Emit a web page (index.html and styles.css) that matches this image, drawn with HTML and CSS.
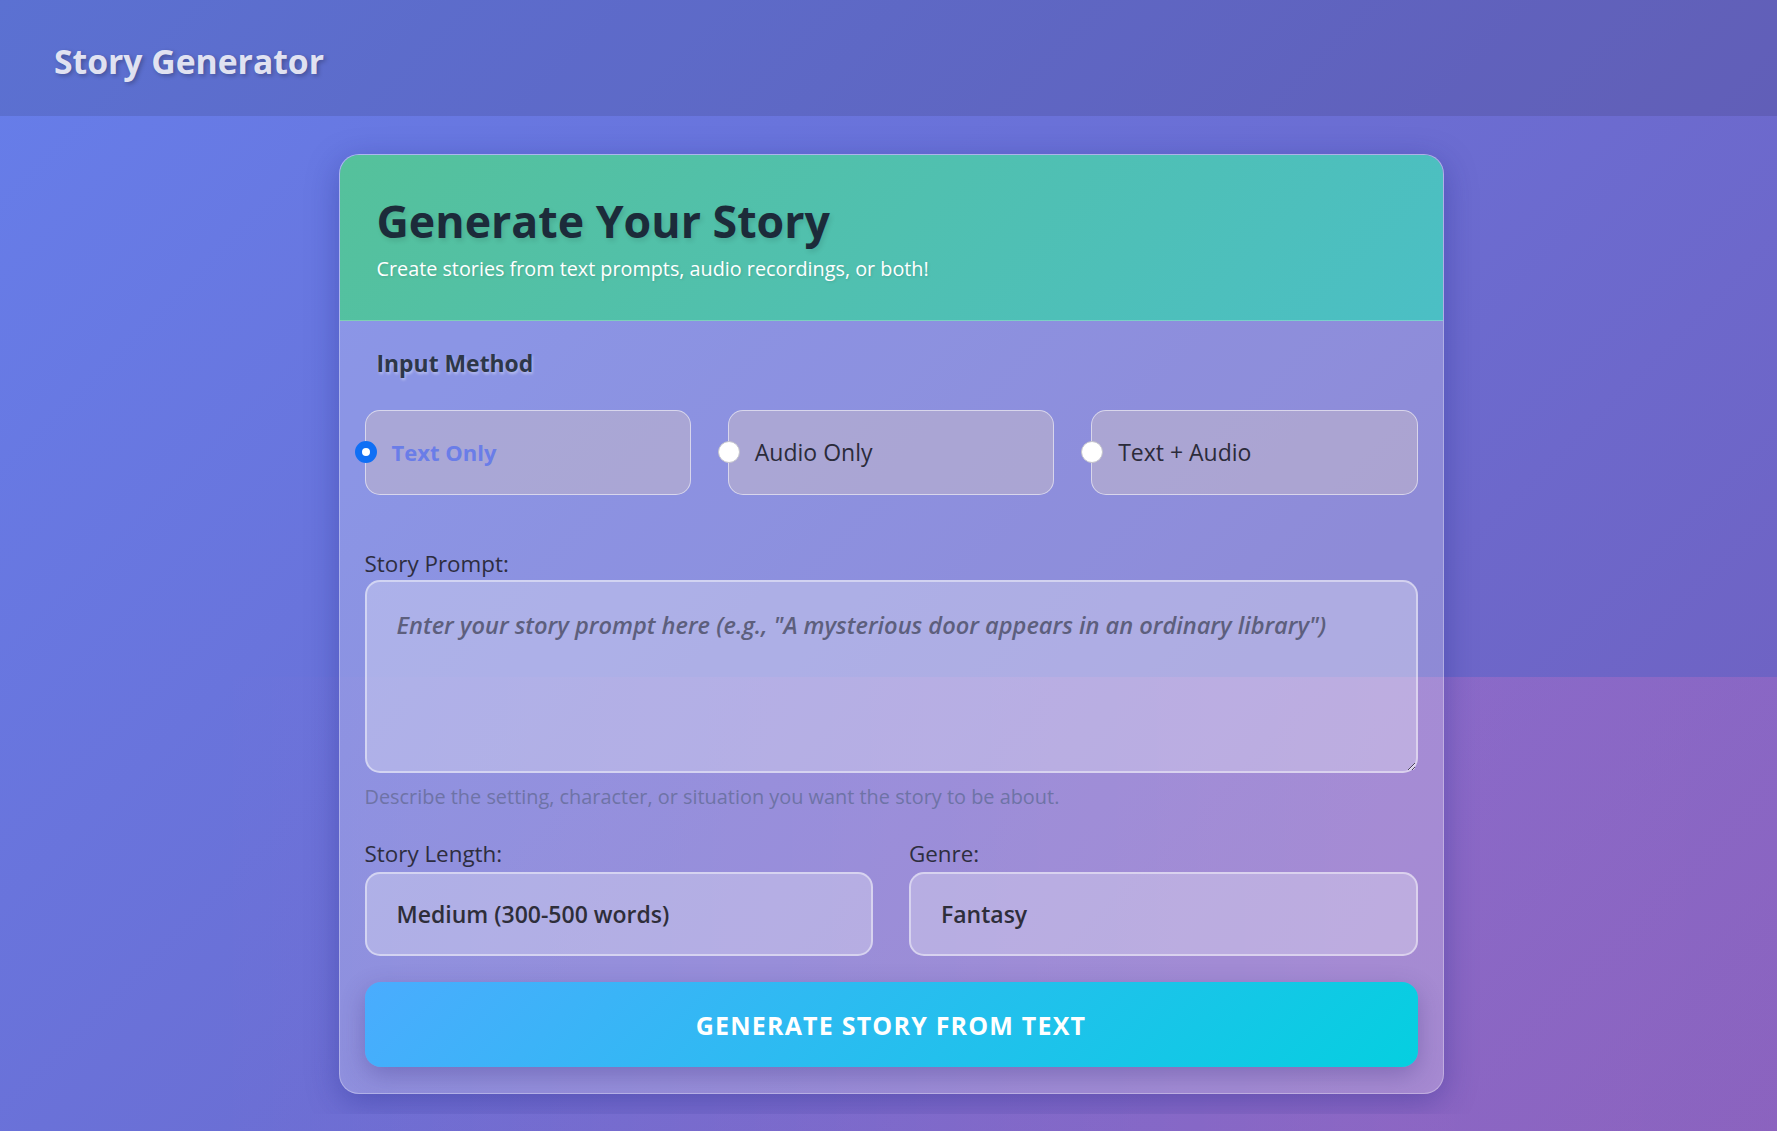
FILE: index.html
```html
<!DOCTYPE html>
<html lang="en">
<head>
<meta charset="utf-8">
<title>Story Generator</title>
<link rel="stylesheet" href="styles.css">
</head>
<body>
<header class="topbar">
  <h1 class="brand">Story Generator</h1>
</header>
<main class="main">
  <section class="card">
    <div class="card-head">
      <h2 class="card-title">Generate Your Story</h2>
      <p class="card-sub">Create stories from text prompts, audio recordings, or both!</p>
    </div>
    <form class="card-body">
      <h3 class="section-title">Input Method</h3>
      <div class="methods">
        <label class="method is-active"><input class="radio" type="radio" name="method" checked><span>Text Only</span></label>
        <label class="method"><input class="radio" type="radio" name="method"><span>Audio Only</span></label>
        <label class="method"><input class="radio" type="radio" name="method"><span>Text + Audio</span></label>
      </div>
      <div class="group prompt-group">
        <label class="field-label" for="prompt">Story Prompt:</label>
        <textarea id="prompt" class="prompt" placeholder="Enter your story prompt here (e.g., &quot;A mysterious door appears in an ordinary library&quot;)"></textarea>
        <p class="help">Describe the setting, character, or situation you want the story to be about.</p>
      </div>
      <div class="row">
        <div class="group">
          <label class="field-label" for="length">Story Length:</label>
          <select id="length" class="select"><option>Medium (300-500 words)</option></select>
        </div>
        <div class="group">
          <label class="field-label" for="genre">Genre:</label>
          <select id="genre" class="select"><option>Fantasy</option></select>
        </div>
      </div>
      <button type="button" class="generate">Generate Story from Text</button>
    </form>
  </section>
</main>
</body>
</html>
```

FILE: styles.css
```css
html {
  min-height: 100%;
  background:
    linear-gradient(90deg, rgba(255,119,198,0) 12%, rgba(255,119,198,0.2) 78%, rgba(255,119,198,0.19) 100%) 0 677px / 100% 454px no-repeat,
    linear-gradient(135deg, #667eea 0%, #705ebd 100%);
}

body {
  margin: 0;
  font-family: "Segoe UI", "Open Sans", sans-serif;
  color: #2d2d3f;
}

.topbar {
  box-sizing: border-box;
  height: 116px;
  padding: 41px 54px 0;
  background: rgba(0, 0, 0, 0.1);
}

.brand {
  margin: 0;
  font-size: 33.7px;
  line-height: 1.2;
  font-weight: 700;
  color: rgba(240, 240, 248, 0.93);
  text-shadow: 2px 2px 4px rgba(0, 0, 0, 0.25);
}

.main {
  padding: 38px 0 20px 5px;
}

.card {
  box-sizing: border-box;
  width: 1105px;
  margin: 0 auto;
  border: 1px solid rgba(255, 255, 255, 0.3);
  border-radius: 20px;
  overflow: hidden;
  background: rgba(255, 255, 255, 0.23);
  box-shadow: 0 8px 32px rgba(31, 38, 135, 0.37);
}

.card-head {
  box-sizing: border-box;
  height: 166px;
  padding: 39px 37px 0;
  background: linear-gradient(135deg, #55c19b 0%, #4bbfc5 100%);
  border-bottom: 1px solid rgba(255, 255, 255, 0.25);
}

.card-title {
  margin: 0;
  font-size: 44.7px;
  line-height: 1.2;
  font-weight: 700;
  color: #1c2b3a;
  text-shadow: 2px 3px 5px rgba(0, 0, 0, 0.1);
}

.card-sub {
  margin: 6px 0 0;
  font-size: 19.8px;
  line-height: 1.5;
  color: #ffffff;
  text-shadow: 1px 1px 3px rgba(0, 0, 0, 0.12);
}

.card-body {
  padding: 28px 25px 26px;
}

.section-title {
  margin: 0 0 0 12px;
  font-size: 22.9px;
  line-height: 1.3;
  font-weight: 700;
  color: #2d3748;
  text-shadow: 1px 2px 3px rgba(255, 255, 255, 0.4);
}

.methods {
  display: grid;
  grid-template-columns: repeat(3, 1fr);
  gap: 37px;
  margin-top: 31px;
}

.method {
  position: relative;
  box-sizing: border-box;
  height: 85px;
  display: flex;
  align-items: center;
  padding-left: 26px;
  border: 1px solid rgba(255, 255, 255, 0.55);
  border-radius: 15px;
  background: rgba(190, 180, 205, 0.6);
  font-size: 23px;
  color: #2b2b3a;
  cursor: pointer;
}

.method.is-active {
  color: #6a7de8;
  font-weight: 700;
  font-size: 22px;
}

.radio {
  position: absolute;
  left: -11px;
  top: 50%;
  margin: -11px 0 0;
  width: 22px;
  height: 22px;
  appearance: none;
  -webkit-appearance: none;
  box-sizing: border-box;
  border-radius: 50%;
  background: #ffffff;
  border: 1px solid #c4c4cc;
}

.radio:checked {
  border: 7px solid #0f6ff5;
}

.group {
  display: flex;
  flex-direction: column;
}

.prompt-group {
  margin-top: 54px;
}

.field-label {
  font-size: 22.4px;
  line-height: 1.3;
  color: #2d2d3f;
  margin-bottom: 2px;
}

.prompt {
  box-sizing: border-box;
  height: 193px;
  padding: 26px 30px;
  border: 2px solid rgba(255, 255, 255, 0.45);
  border-radius: 15px;
  background: rgba(235, 235, 245, 0.35);
  font-family: inherit;
  font-size: 23.6px;
  line-height: 1.5;
  color: #2d2d3f;
  outline: none;
}

.prompt::placeholder {
  font-style: italic;
  font-weight: 600;
  color: #5d5f7d;
}

.help {
  margin: 11px 0 0;
  font-size: 19.9px;
  line-height: 26px;
  color: #6e73a6;
}

.row {
  display: grid;
  grid-template-columns: 1fr 1fr;
  gap: 36px;
  margin-top: 29px;
}

.row .field-label {
  margin-bottom: 4px;
}

.select {
  box-sizing: border-box;
  height: 84px;
  padding: 0 30px;
  border: 2px solid rgba(255, 255, 255, 0.45);
  border-radius: 15px;
  background: rgba(235, 235, 245, 0.35);
  appearance: none;
  -webkit-appearance: none;
  font-family: inherit;
  font-size: 23px;
  font-weight: 600;
  color: #2e2e3a;
  outline: none;
}

.generate {
  display: block;
  width: 100%;
  height: 85px;
  margin-top: 26px;
  border: 0;
  border-radius: 16px;
  background: linear-gradient(135deg, #4aacfe 0%, #05cfe0 100%);
  box-shadow: 0 8px 25px rgba(50, 40, 120, 0.3);
  font-family: inherit;
  font-size: 25px;
  font-weight: 700;
  letter-spacing: 1.2px;
  text-transform: uppercase;
  color: #ffffff;
  cursor: pointer;
}
```
